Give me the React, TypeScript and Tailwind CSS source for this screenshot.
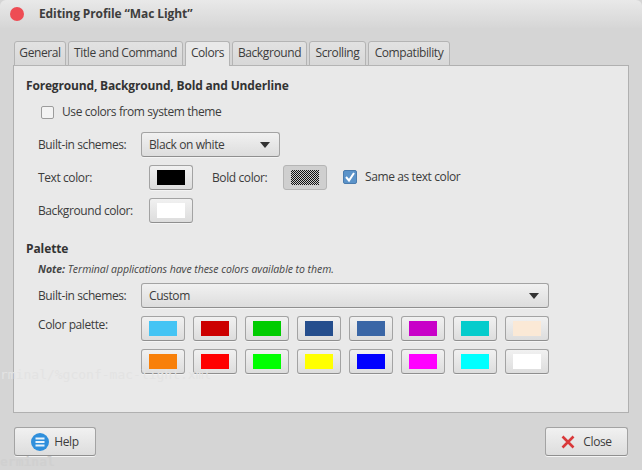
const swatches = [
  ["bg-[#44c4f4]", "bg-[#cc0000]", "bg-[#00cc00]", "bg-[#254e8d]", "bg-[#3a66a6]", "bg-[#c800c8]", "bg-[#06cccc]", "bg-[#fbe9d6]"],
  ["bg-[#f8800a]", "bg-[#ff0000]", "bg-[#00ff00]", "bg-[#ffff00]", "bg-[#0000ff]", "bg-[#ff00ff]", "bg-[#00ffff]", "bg-[#ffffff]"],
];

const tabs = [
  { label: "General", width: "w-[52px]" },
  { label: "Title and Command", width: "w-[115px]" },
  { label: "Colors", width: "w-[45px]" },
  { label: "Background", width: "w-[75px]" },
  { label: "Scrolling", width: "w-[57px]" },
  { label: "Compatibility", width: "w-[82px]" },
];

const btn =
  "border border-[#a3a3a3] border-b-[#8f8f8f] rounded-[3px] bg-gradient-to-b from-[#f1f1f1] to-[#dddddd] shadow-[0_1px_0_#f4f4f4]";

const Swatch = ({ color, pressed }: { color: string; pressed?: boolean }) => (
  <div
    className={`w-[44px] h-[25px] flex items-center justify-center ${
      pressed ? "border border-[#b5b5b5] rounded-[3px] bg-[#cfcfcf]" : btn
    }`}
  >
    <div className={`w-[28px] h-[15px] ${color}`} />
  </div>
);

const Combo = ({ label, className }: { label: string; className: string }) => (
  <div className={`h-[25px] flex items-center justify-between pl-[7px] pr-[7px] ${btn} ${className}`}>
    <span>{label}</span>
    <svg width="12" height="6" viewBox="0 0 12 6" className="mr-[1px]">
      <path d="M1 0h10L6 6z" fill="#333333" />
    </svg>
  </div>
);

export default function App() {
  return (
    <div className="relative w-[642px] h-[470px] overflow-hidden bg-[#d5d5d5] text-[12px] leading-[16px] tracking-[-0.4px] text-[#3c3c3c] font-['Open_Sans','Noto_Sans',sans-serif]">
      {/* terminal text showing through the translucent window */}
      <div className="absolute left-0 top-[367px] z-10 font-['DejaVu_Sans_Mono',monospace] tracking-normal text-[13px] text-[#e3e3e3] pointer-events-none">
        rminal/%gconf-mac-light.xml
      </div>
      <div className="absolute left-0 top-[454px] font-['DejaVu_Sans_Mono',monospace] tracking-normal font-bold text-[13px] text-[#d0d0d0] pointer-events-none">
        erminal
      </div>

      {/* title bar */}
      <div className="h-[28px] flex items-center bg-gradient-to-b from-[#e9e9e9] to-[#d6d6d6] rounded-t-[6px]">
        <div className="w-[14px] h-[14px] rounded-full bg-[#ee4c54] ml-[10px]" />
        <span className="ml-[15px] font-bold tracking-[-0.1px] text-[#3d3d3d]">Editing Profile “Mac Light”</span>
      </div>

      {/* tabs */}
      <div className="flex items-end gap-[2px] pl-[14px] h-[38px] -mb-px relative">
        {tabs.map((t) =>
          t.label === "Colors" ? (
            <div
              key={t.label}
              className={`h-[25px] ${t.width} pt-[3px] text-center bg-[#e9e9e9] border border-b-0 border-[#b4b4b4] rounded-t-[3px] z-10`}
            >
              {t.label}
            </div>
          ) : (
            <div
              key={t.label}
              className={`h-[25px] ${t.width} pt-[3px] text-center bg-gradient-to-b from-[#e2e2e2] to-[#d8d8d8] border border-[#b4b4b4] rounded-t-[3px]`}
            >
              {t.label}
            </div>
          )
        )}
      </div>

      {/* panel */}
      <div className="mx-[13px] w-[616px] h-[348px] bg-[#e9e9e9] border border-[#b0b0b0] pl-[12px] pt-[12px]">
        <div className="font-bold tracking-[-0.17px] text-[#333333]">Foreground, Background, Bold and Underline</div>

        <div className="flex items-center ml-[15px] mt-[10px] h-[16px] gap-[8px]">
          <div className="w-[13px] h-[13px] rounded-[2px] border border-[#9c9c9c] bg-[#f3f3f3]" />
          <span>Use colors from system theme</span>
        </div>

        <div className="flex items-center ml-[12px] mt-[12px]">
          <span className="w-[103px]">Built-in schemes:</span>
          <Combo label="Black on white" className="w-[139px]" />
        </div>

        <div className="flex items-center ml-[12px] mt-[8px]">
          <span className="w-[111px]">Text color:</span>
          <Swatch color="bg-black" />
          <span className="ml-[19px] w-[71px]">Bold color:</span>
          <Swatch color="bg-[repeating-conic-gradient(#111111_0_25%,#cccccc_0_50%)] bg-[length:2px_2px]" pressed />
          <div className="w-[14px] h-[14px] ml-[16px] -mt-[1px] rounded-[2px] bg-[#5b93c9] border border-[#4a7bad] flex items-center justify-center">
            <svg width="12" height="12" viewBox="0 0 12 12">
              <path d="M2 6l3 3.5L10 2" fill="none" stroke="#ffffff" strokeWidth="2" />
            </svg>
          </div>
          <span className="ml-[8px] -mt-[2px]">Same as text color</span>
        </div>

        <div className="flex items-center ml-[12px] mt-[8px]">
          <span className="w-[111px]">Background color:</span>
          <Swatch color="bg-white" />
        </div>

        <div className="font-bold tracking-[-0.1px] text-[#333333] mt-[18px]">Palette</div>
        <div className="ml-[12px] mt-[4px] text-[10.5px] tracking-[-0.05px] italic text-[#444444]">
          <span className="font-bold">Note:</span> Terminal applications have these colors available to them.
        </div>

        <div className="flex items-center ml-[12px] mt-[6px]">
          <span className="w-[103px]">Built-in schemes:</span>
          <Combo label="Custom" className="w-[408px]" />
        </div>

        <div className="flex ml-[12px] mt-[8px]">
          <span className="w-[103px] mt-[1px]">Color palette:</span>
          <div className="flex flex-col gap-[8px]">
            {swatches.map((row, i) => (
              <div key={i} className="flex gap-[8px]">
                {row.map((c, j) => (
                  <Swatch key={j} color={c} />
                ))}
              </div>
            ))}
          </div>
        </div>
      </div>

      {/* bottom buttons */}
      <div className="flex justify-between pl-[14px] pr-[14px] mt-[14px]">
        <div className={`w-[82px] h-[29px] flex items-center justify-center gap-[5px] ${btn}`}>
          <svg width="18" height="18" viewBox="0 0 18 18">
            <circle cx="9" cy="9" r="9" fill="#2f8fdc" />
            <path d="M4.5 5.5h9M4.5 9h9M4.5 12.5h9" stroke="#e8f3fb" strokeWidth="2" />
          </svg>
          <span>Help</span>
        </div>
        <div className={`w-[83px] h-[29px] flex items-center justify-center gap-[8px] ${btn}`}>
          <svg width="14" height="14" viewBox="0 0 14 14">
            <path d="M1.5 1.5l11 11M12.5 1.5l-11 11" stroke="#d9393a" strokeWidth="2.6" />
          </svg>
          <span>Close</span>
        </div>
      </div>
    </div>
  );
}
